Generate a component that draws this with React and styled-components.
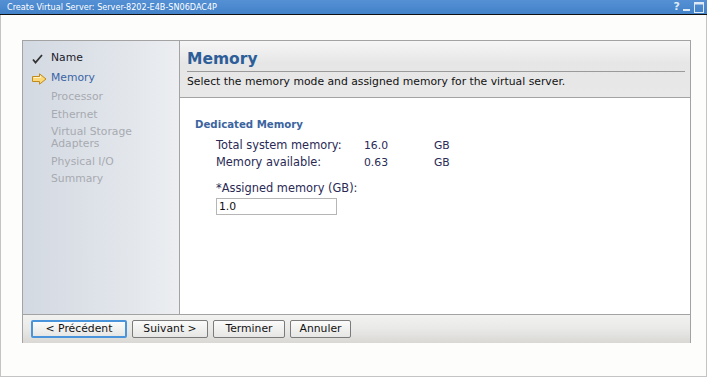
import React from "react";
import styled, { createGlobalStyle } from "styled-components";

const GlobalStyle = createGlobalStyle`
  body {
    margin: 0;
    background: #ffffff;
    font-family: "DejaVu Sans", Verdana, sans-serif;
  }
  * {
    box-sizing: border-box;
  }
`;

const steps = [
  { label: "Name", state: "done" },
  { label: "Memory", state: "current" },
  { label: "Processor", state: "todo" },
  { label: "Ethernet", state: "todo" },
  { label: "Virtual Storage Adapters", state: "todo" },
  { label: "Physical I/O", state: "todo" },
  { label: "Summary", state: "todo" },
];

const stats = [
  { label: "Total system memory:", value: "16.0", unit: "GB" },
  { label: "Memory available:", value: "0.63", unit: "GB" },
];

const buttons = [
  { label: "< Précédent", width: 96 },
  { label: "Suivant >", width: 76 },
  { label: "Terminer", width: 72 },
  { label: "Annuler", width: 61 },
];

export default function App() {
  return (
    <>
      <GlobalStyle />
      <Window>
        <TitleBar>
          <span>Create Virtual Server: Server-8202-E4B-SN06DAC4P</span>
          <TitleIcons>
            <TitleIcon>?</TitleIcon>
            <TitleIcon>
              <svg width="8" height="9" viewBox="0 0 8 9">
                <rect x="0" y="6" width="7" height="2" fill="#dfeaf7" />
              </svg>
            </TitleIcon>
            <TitleIcon>
              <svg width="10" height="11" viewBox="0 0 10 11">
                <rect x="0.5" y="0.5" width="9" height="10" fill="none" stroke="#dfeaf7" />
                <rect x="0.5" y="0.5" width="9" height="2" fill="#dfeaf7" />
              </svg>
            </TitleIcon>
          </TitleIcons>
        </TitleBar>
        <WindowBody>
          <Wizard>
            <Nav>
              {steps.map((s) => (
                <Step key={s.label} $state={s.state}>
                  <StepMark $state={s.state}>
                    {s.state === "done" && (
                      <svg width="11" height="10" viewBox="0 0 11 10">
                        <path d="M1 5.5 L3.5 8.5 L10 1" fill="none" stroke="#333" strokeWidth="1.8" />
                      </svg>
                    )}
                    {s.state === "current" && (
                      <svg width="15" height="12" viewBox="0 0 15 12">
                        <path
                          d="M0.5 3.5 H7.5 V0.8 L14 6 L7.5 11.2 V8.5 H0.5 Z"
                          fill="#fcd878"
                          stroke="#c08a1c"
                          strokeWidth="1"
                        />
                        <path d="M1.5 4.5 H8.5 V2.8" fill="none" stroke="#fff4c8" strokeWidth="1" />
                      </svg>
                    )}
                  </StepMark>
                  <StepLabel>{s.label}</StepLabel>
                </Step>
              ))}
            </Nav>
            <Main>
              <Header>
                <PageTitle>Memory</PageTitle>
                <Description>
                  Select the memory mode and assigned memory for the virtual server.
                </Description>
              </Header>
              <Content>
                <SectionTitle>Dedicated Memory</SectionTitle>
                <StatGrid>
                  {stats.map((r) => (
                    <React.Fragment key={r.label}>
                      <StatLabel>{r.label}</StatLabel>
                      <span>{r.value}</span>
                      <span>{r.unit}</span>
                    </React.Fragment>
                  ))}
                </StatGrid>
                <FieldLabel>*Assigned memory (GB):</FieldLabel>
                <Input defaultValue="1.0" />
              </Content>
            </Main>
            <Footer>
              {buttons.map((b, i) => (
                <Button key={b.label} $width={b.width} $focused={i === 0}>
                  {b.label}
                </Button>
              ))}
            </Footer>
          </Wizard>
        </WindowBody>
      </Window>
    </>
  );
}

const Window = styled.div`
  width: 707px;
  height: 377px;
  border: 1px solid #c4c4c4;
  border-top: none;
  background: #fdfdfc;
  display: flex;
  flex-direction: column;
`;

const TitleBar = styled.div`
  height: 15px;
  background: linear-gradient(#5590d4, #4282c8);
  border-bottom: 1px solid #111;
  color: #ffffff;
  font-family: "DejaVu Sans Condensed", "DejaVu Sans", sans-serif;
  font-size: 9px;
  line-height: 14px;
  padding-left: 7px;
  display: flex;
  justify-content: space-between;
  align-items: center;
  margin-left: -1px;
  margin-right: -1px;
`;

const TitleIcons = styled.div`
  display: flex;
  align-items: center;
  gap: 3px;
  padding-right: 3px;
  height: 14px;
`;

const TitleIcon = styled.span`
  color: #dfeaf7;
  font-family: "DejaVu Sans", sans-serif;
  font-weight: bold;
  font-size: 11px;
  display: flex;
  align-items: center;
`;

const WindowBody = styled.div`
  padding: 25px 15px 0 21px;
`;

const Wizard = styled.div`
  border: 1px solid #a3a3a3;
  display: grid;
  grid-template-columns: 157px 1fr;
  grid-template-rows: 273px 29px;
  height: 303px;
`;

const Nav = styled.div`
  background: linear-gradient(90deg, #d3d9e2 0%, #e3e7ec 70%, #eceef1 100%);
  border-right: 1px solid #a3a3a3;
  padding-top: 11px;
  padding-left: 9px;
  font-size: 10.8px;
`;

const Step = styled.div`
  display: flex;
  align-items: flex-start;
  margin-bottom: ${(p) => (p.$state === "todo" ? "5.5px" : "6px")};
  color: ${(p) =>
    p.$state === "done" ? "#1a1a2a" : p.$state === "current" ? "#3a64a4" : "#a7aab0"};
`;

const StepMark = styled.div`
  width: 19px;
  flex: none;
  display: flex;
  align-items: center;
  height: ${(p) => (p.$state === "done" ? "14px" : p.$state === "current" ? "13px" : "12px")};
`;

const StepLabel = styled.div`
  width: 100px;
  line-height: 12px;
`;

const Main = styled.div`
  display: flex;
  flex-direction: column;
  background: #ffffff;
`;

const Header = styled.div`
  height: 57px;
  background: linear-gradient(#f6f6f6, #e6e6e6 40%, #e8e8e8);
  border-bottom: 1px solid #a3a3a3;
  padding: 9px 5px 0 7px;
`;

const PageTitle = styled.div`
  font-size: 15.5px;
  font-weight: bold;
  color: #2d5e98;
  padding-bottom: 3px;
  border-bottom: 1px solid #9a9a9a;
  line-height: 18px;
`;

const Description = styled.div`
  font-size: 10.8px;
  color: #111;
  padding-top: 3px;
`;

const Content = styled.div`
  padding: 21px 0 0 15px;
  font-size: 11.4px;
  color: #2a2a55;
`;

const SectionTitle = styled.div`
  font-weight: bold;
  font-size: 10.2px;
  color: #3b64a0;
  margin-bottom: 9px;
`;

const StatGrid = styled.div`
  display: grid;
  grid-template-columns: 148px 70px auto;
  row-gap: 4px;
  padding-left: 21px;
  line-height: 13px;
  font-size: 10.8px;
`;

const StatLabel = styled.span`
  font-size: 11.4px;
`;

const FieldLabel = styled.div`
  padding-left: 21px;
  margin-top: 13px;
  line-height: 13px;
`;

const Input = styled.input`
  display: block;
  margin: 3px 0 0 21px;
  width: 121px;
  height: 17px;
  border: 1px solid #b6b6b6;
  padding: 1px 2px;
  font-family: "DejaVu Sans", sans-serif;
  font-size: 10.8px;
  color: #111;
  outline: none;
`;

const Footer = styled.div`
  grid-column: 1 / span 2;
  border-top: 1px solid #a3a3a3;
  background: linear-gradient(#f2f2f1, #e9e9e8 50%, #d9d8d4);
  display: flex;
  align-items: center;
  gap: 5px;
  padding-left: 8px;
`;

const Button = styled.button`
  width: ${(p) => p.$width}px;
  height: 18px;
  padding: 0;
  font-family: "DejaVu Sans", sans-serif;
  font-size: 10.8px;
  color: #111;
  border-radius: 2px;
  background: linear-gradient(#fbfbfb, #e6e6e4);
  border: ${(p) => (p.$focused ? "2px solid #4a94dc" : "1px solid #7b7b7b")};
  line-height: 14px;
`;
